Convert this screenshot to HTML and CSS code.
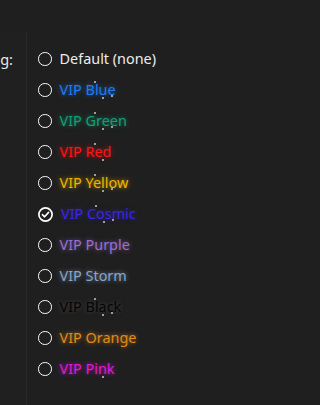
FILE: index.html
```html
<!DOCTYPE html>
<html>
<head>
<meta charset="utf-8">
<link rel="stylesheet" href="styles.css">
</head>
<body>
<div class="top"></div>
<div class="main">
  <div class="side"><div class="label">Name coloring:</div></div>
  <div class="options">
    <div class="opt"><span class="radio"></span><span class="name c-default">Default (none)</span></div>
    <div class="opt"><span class="radio"></span><span class="name c-blue">VIP Blue<i class="sp s1"></i><i class="sp s2"></i><i class="sp s3"></i></span></div>
    <div class="opt"><span class="radio"></span><span class="name c-green">VIP Green<i class="sp s1"></i><i class="sp s2"></i><i class="sp s3"></i></span></div>
    <div class="opt"><span class="radio"></span><span class="name c-red">VIP Red<i class="sp s1"></i><i class="sp s2"></i></span></div>
    <div class="opt"><span class="radio"></span><span class="name c-yellow">VIP Yellow<i class="sp s1"></i><i class="sp s2"></i><i class="sp s3"></i></span></div>
    <div class="opt"><span class="radio checked"><svg viewBox="0 0 15 15" width="15" height="15"><circle cx="7.5" cy="7.5" r="6.6" fill="none" stroke="#fff" stroke-width="1.7"/><path d="M4.4 7.7 L6.6 9.8 L10.6 5.4" fill="none" stroke="#fff" stroke-width="1.6" stroke-linecap="round" stroke-linejoin="round"/></svg></span><span class="name c-cosmic">VIP Cosmic<i class="sp s1"></i><i class="sp s2"></i><i class="sp s3"></i></span></div>
    <div class="opt"><span class="radio"></span><span class="name c-purple">VIP Purple</span></div>
    <div class="opt"><span class="radio"></span><span class="name c-storm">VIP Storm</span></div>
    <div class="opt"><span class="radio"></span><span class="name c-black">VIP Black<i class="sp s1"></i><i class="sp s2"></i><i class="sp s3"></i></span></div>
    <div class="opt"><span class="radio"></span><span class="name c-orange">VIP Orange</span></div>
    <div class="opt"><span class="radio"></span><span class="name c-pink">VIP Pink<i class="sp s2"></i></span></div>
  </div>
</div>
</body>
</html>
```
FILE: styles.css
```css
html, body {
  margin: 0;
  padding: 0;
  background: #1f1f1f;
  height: 100%;
  overflow: hidden;
}
body {
  font-family: "Noto Sans", "Open Sans", sans-serif;
  font-size: 14.4px;
  color: #e8e8e8;
}
.top {
  height: 33px;
}
.main {
  display: flex;
  height: 372px;
}
.side {
  width: 26px;
  flex: none;
  border-right: 1px solid #2a2a2a;
  background: #202020;
  overflow: hidden;
  display: flex;
  justify-content: flex-end;
}
.label {
  white-space: nowrap;
  padding-top: 16px;
  margin-right: 13px;
  line-height: 20px;
  font-size: 14.5px;
}
.options {
  display: flex;
  flex-direction: column;
  gap: 11px;
  padding-left: 11px;
  padding-top: 16px;
}
.opt {
  display: flex;
  align-items: center;
  gap: 8px;
  height: 20px;
}
.radio {
  width: 11.6px;
  height: 11.6px;
  border: 1.7px solid #fff;
  border-radius: 50%;
  flex: none;
}
.radio.checked {
  border: none;
  width: 15px;
  height: 15px;
}
.radio.checked svg {
  display: block;
}
.name {
  position: relative;
  white-space: nowrap;
  line-height: 20px;
}
.c-default { color: #ececec; }
.c-blue { color: #1d7cf2; text-shadow: 0 0 5px rgba(29,124,242,0.75); }
.c-green { color: #13a078; text-shadow: 0 0 5px rgba(19,160,120,0.75); }
.c-red { color: #ff1414; text-shadow: 0 0 5px rgba(255,20,20,0.75); }
.c-yellow { color: #f0b400; text-shadow: 0 0 5px rgba(240,180,0,0.75); }
.c-cosmic { color: #3a26e6; text-shadow: 0 0 5px rgba(58,38,230,0.6); }
.c-purple { color: #9b6fcf; text-shadow: 0 0 5px rgba(155,111,207,0.75); }
.c-storm { color: #8aa5c8; text-shadow: 0 0 5px rgba(138,165,200,0.75); }
.c-black { color: #050505; text-shadow: 0 0 4px rgba(100,100,100,0.6); }
.c-orange { color: #e08a1c; text-shadow: 0 0 5px rgba(224,138,28,0.75); }
.c-pink { color: #e01ad8; text-shadow: 0 0 5px rgba(224,26,216,0.75); }
.sp {
  position: absolute;
  width: 2px;
  height: 2px;
  background: #c8c8c8;
  border-radius: 1px;
}
.sp.s1 { left: 34px; top: 1px; }
.sp.s2 { left: 42px; top: 17px; }
.sp.s3 { left: 51px; top: 15px; }
```
